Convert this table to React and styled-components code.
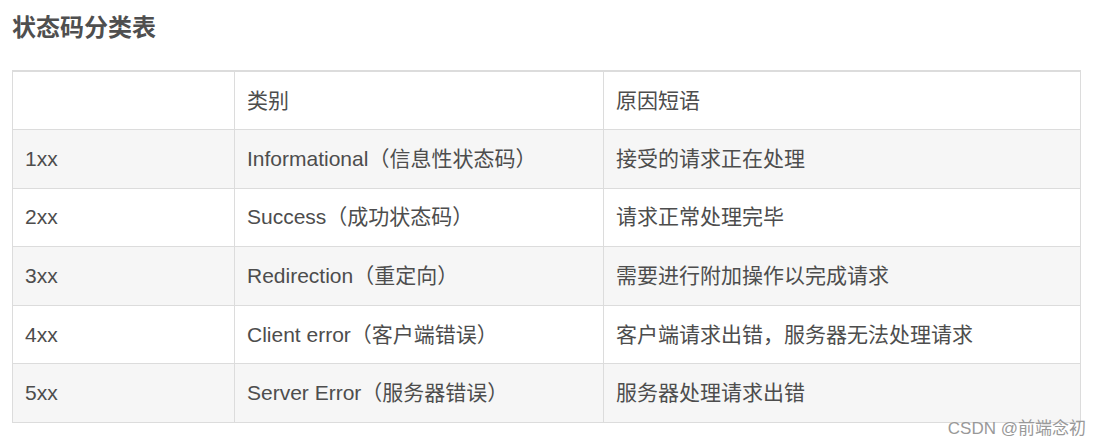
import React from 'react';
import styled, { createGlobalStyle } from 'styled-components';

const GlobalStyle = createGlobalStyle`
  html, body {
    margin: 0;
    padding: 0;
    background: #fff;
  }
  body {
    font-family: "Liberation Sans", "Noto Sans CJK SC", sans-serif;
    color: #4d4d4d;
  }
`;

const rows = [
  ['1xx', 'Informational（信息性状态码）', '接受的请求正在处理'],
  ['2xx', 'Success（成功状态码）', '请求正常处理完毕'],
  ['3xx', 'Redirection（重定向）', '需要进行附加操作以完成请求'],
  ['4xx', 'Client error（客户端错误）', '客户端请求出错，服务器无法处理请求'],
  ['5xx', 'Server Error（服务器错误）', '服务器处理请求出错'],
];

const Page = styled.div`
  position: relative;
  width: 1100px;
  height: 446px;
  padding: 13px 12px 0 12px;
  box-sizing: border-box;
`;

const Title = styled.h3`
  margin: 0 0 27px 0;
  font-size: 24px;
  line-height: 30px;
  font-weight: 700;
  color: #4f4f4f;
`;

const Table = styled.table`
  width: 1068px;
  border-collapse: collapse;
  border: 1px solid #dcdcdc;
  border-top-width: 2px;
  table-layout: fixed;
  font-size: 21px;
  line-height: 28px;
`;

const Row = styled.tr`
  height: 58.6px;
  background: ${(p) => (p.$striped ? '#f6f6f6' : '#fff')};
`;

const Cell = styled.td`
  border: 1px solid #dcdcdc;
  padding: 0 12px;
  color: #4d4d4d;
  vertical-align: middle;
  white-space: nowrap;
`;

const Watermark = styled.div`
  position: absolute;
  right: 14px;
  top: 417px;
  font-size: 17px;
  line-height: 24px;
  color: #999;
`;

export default function App() {
  return (
    <>
      <GlobalStyle />
      <Page>
        <Title>状态码分类表</Title>
        <Table>
          <colgroup>
            <col style={{ width: 222 }} />
            <col style={{ width: 369 }} />
            <col style={{ width: 477 }} />
          </colgroup>
          <tbody>
            <Row>
              <Cell></Cell>
              <Cell>类别</Cell>
              <Cell>原因短语</Cell>
            </Row>
            {rows.map((r, i) => (
              <Row key={r[0]} $striped={i % 2 === 0}>
                <Cell>{r[0]}</Cell>
                <Cell>{r[1]}</Cell>
                <Cell>{r[2]}</Cell>
              </Row>
            ))}
          </tbody>
        </Table>
        <Watermark>CSDN @前端念初</Watermark>
      </Page>
    </>
  );
}
